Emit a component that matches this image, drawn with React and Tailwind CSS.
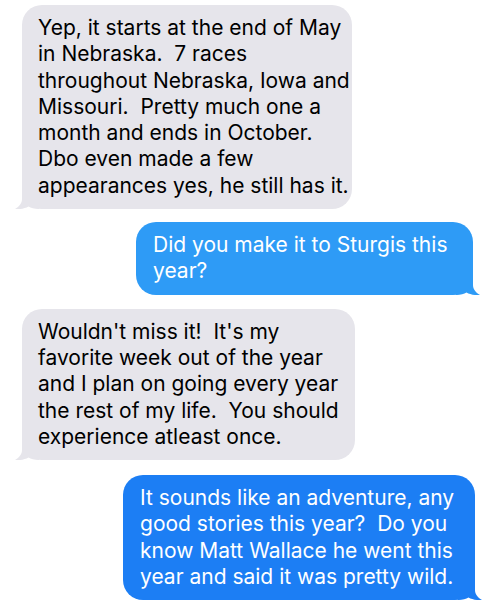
import React from 'react'

const messages = [
    {
        from: 'them',
        lines: [
            'Yep, it starts at the end of May',
            'in Nebraska.  7 races',
            'throughout Nebraska, Iowa and',
            'Missouri.  Pretty much one a',
            'month and ends in October.',
            'Dbo even made a few',
            'appearances yes, he still has it.',
        ],
        box: 'ml-[22px] mt-[5px] w-[330px]',
    },
    {
        from: 'me',
        lines: ['Did you make it to Sturgis this', 'year?'],
        box: 'mr-[11px] mt-[13px] w-[337px]',
        color: 'bg-[#2e9bf6]',
        fill: '#2e9bf6',
    },
    {
        from: 'them',
        lines: [
            "Wouldn't miss it!  It's my",
            'favorite week out of the year',
            'and I plan on going every year',
            'the rest of my life.  You should',
            'experience atleast once.',
        ],
        box: 'ml-[22px] mt-[14px] w-[333px]',
    },
    {
        from: 'me',
        lines: [
            'It sounds like an adventure, any',
            'good stories this year?  Do you',
            'know Matt Wallace he went this',
            'year and said it was pretty wild.',
        ],
        box: 'mr-[9px] mt-[15px] w-[352px]',
        color: 'bg-[#1c7ef4]',
        fill: '#1c7ef4',
    },
]

function Tail({ side, fill }) {
    // little hook at the bottom corner of each bubble
    if (side === 'them') {
        return (
            <svg className="absolute bottom-0 left-[-7px]" width="24" height="22" viewBox="0 0 24 22">
                <path d="M7,0 L7,12 C7,16 4.5,19.5 0,22 C5,22.5 10,21.5 13.5,19.5 C16,21 19,22 24,22 L24,0 Z" fill={fill} />
            </svg>
        )
    }
    return (
        <svg className="absolute bottom-0 right-[-7px]" width="24" height="22" viewBox="0 0 24 22">
            <path d="M17,0 L17,12 C17,16 19.5,19.5 24,22 C19,22.5 14,21.5 10.5,19.5 C8,21 5,22 0,22 L0,0 Z" fill={fill} />
        </svg>
    )
}

export default function App() {
    return (
        <div
            className="w-[484px] h-[600px] bg-white overflow-hidden flex flex-col"
            style={{ fontFamily: 'Inter, "Liberation Sans", sans-serif' }}
        >
            {messages.map((m, i) => {
                const mine = m.from === 'me'
                return (
                    <div
                        key={i}
                        className={`relative rounded-[20px] py-[10px] text-[21px] leading-[26.3px] ${m.box} ${
                            mine ? `self-end pl-[17px] text-white ${m.color}` : 'self-start pl-[16px] text-black bg-[#e6e5eb]'
                        }`}
                    >
                        <Tail side={m.from} fill={mine ? m.fill : '#e6e5eb'} />
                        <div className="relative">
                            {m.lines.map((line, j) => (
                                <span key={j} className="block whitespace-pre">{line}</span>
                            ))}
                        </div>
                    </div>
                )
            })}
        </div>
    )
}
